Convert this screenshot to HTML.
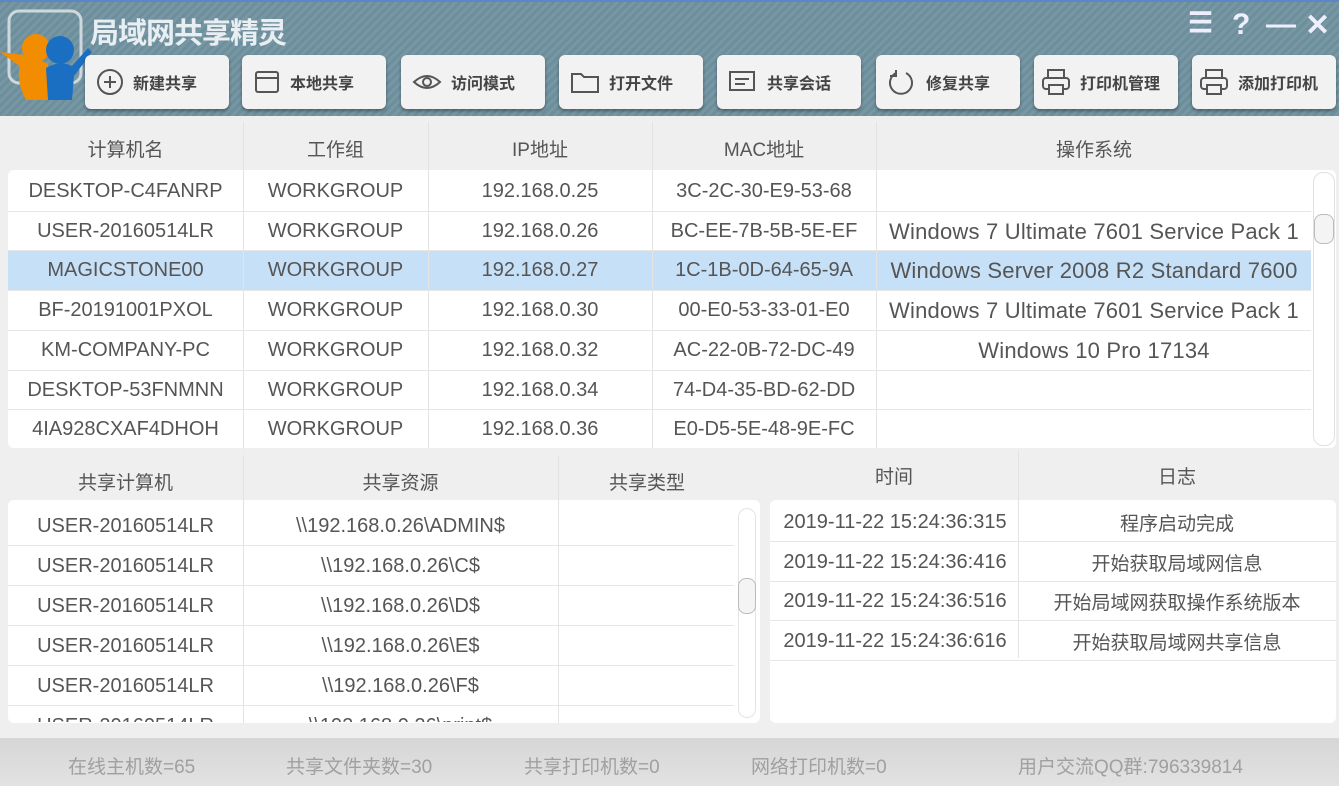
<!DOCTYPE html>
<html><head><meta charset="utf-8"><style>
*{margin:0;padding:0;box-sizing:border-box}
body{width:1339px;height:786px;overflow:hidden;background:#efefef;font-family:"Liberation Sans","Noto Sans CJK SC",sans-serif;color:#555;position:relative}
.hdr{position:absolute;left:0;top:0;width:1339px;height:116px;background:repeating-linear-gradient(135deg,#6d8e9b 0 3px,#7897a4 3px 6px);border-top:2px solid #5b86c8}
.title{position:absolute;left:90px;top:8px;font-size:29px;font-weight:bold;color:#e8eef2;letter-spacing:-1px}
.btn{position:absolute;top:53px;height:54px;width:144px;background:#f2f2f2;border-radius:6px;box-shadow:0 2px 3px rgba(0,0,0,.35);display:flex;align-items:center;font-size:16px;font-weight:bold;color:#444;padding-left:10px}
.btn svg{margin-right:8px;flex:none}
.ctl{position:absolute;top:6px;color:#eef;font-size:30px;font-weight:bold}
.cell{position:absolute;text-align:center;font-size:20px;white-space:nowrap;overflow:hidden}
.th{font-size:19px;color:#555}
.panel{position:absolute;background:#fff;border-radius:6px}
.hl{position:absolute;height:1px;background:#e6e6e6}
.vl{position:absolute;width:1px;background:#e3e3e3}
.sb{position:absolute;font-size:19px;color:#a0a0a0;top:752px}
</style></head><body>
<div class="hdr">
<svg style="position:absolute;left:0;top:6px" width="92" height="96" viewBox="0 0 92 96">
<rect x="9" y="3" width="72" height="72" rx="10" fill="none" stroke="#cfd8dc" stroke-width="3"/>
<path d="M0 44 L22 60 L40 60 L32 48 Z" fill="#f28c00"/>
<circle cx="36" cy="40" r="14" fill="#f28c00"/>
<path d="M20 57 Q36 48 48 56 L48 92 L26 92 Q16 74 20 57Z" fill="#f28c00"/>
<circle cx="60" cy="42" r="14" fill="#1b6fc2"/>
<path d="M46 60 Q60 52 72 58 L88 40 L92 44 L74 68 L72 92 L48 92Z" fill="#1b6fc2"/>
</svg>
<div class="title">局域网共享精灵</div>
<div class="ctl" style="left:1188px;top:4px;font-size:28px">☰</div>
<div class="ctl" style="left:1232px">?</div>
<div class="ctl" style="left:1266px">—</div>
<div class="ctl" style="left:1305px">✕</div>
<div class="btn" style="left:85px"><svg width="30" height="30"><circle cx="15" cy="15" r="12" fill="none" stroke="#555" stroke-width="2"/><path d="M15 9v12M9 15h12" stroke="#555" stroke-width="2"/></svg>新建共享</div>
<div class="btn" style="left:242px"><svg width="30" height="30"><rect x="4" y="5" width="22" height="20" rx="2" fill="none" stroke="#555" stroke-width="2"/><path d="M4 11h22" stroke="#555" stroke-width="2"/></svg>本地共享</div>
<div class="btn" style="left:401px"><svg width="32" height="30"><path d="M3 15Q16 3 29 15Q16 27 3 15Z" fill="none" stroke="#555" stroke-width="2"/><circle cx="16" cy="15" r="4" fill="none" stroke="#555" stroke-width="2"/></svg>访问模式</div>
<div class="btn" style="left:559px"><svg width="32" height="30"><path d="M3 7h9l3 3h14v15H3Z" fill="none" stroke="#555" stroke-width="2"/></svg>打开文件</div>
<div class="btn" style="left:717px"><svg width="32" height="30"><rect x="3" y="5" width="24" height="18" fill="none" stroke="#555" stroke-width="2"/><path d="M8 12h14M8 17h10" stroke="#555" stroke-width="2"/></svg>共享会话</div>
<div class="btn" style="left:876px"><svg width="32" height="30"><path d="M10 6A11 11 0 1 0 20 6" fill="none" stroke="#555" stroke-width="2"/><path d="M10 3v6H4" fill="none" stroke="#555" stroke-width="2"/></svg>修复共享</div>
<div class="btn" style="left:1034px;padding-left:6px"><svg width="32" height="30"><rect x="8" y="3" width="16" height="8" fill="none" stroke="#555" stroke-width="2"/><rect x="3" y="11" width="26" height="11" rx="3" fill="none" stroke="#555" stroke-width="2"/><rect x="9" y="18" width="14" height="9" fill="#f2f2f2" stroke="#555" stroke-width="2"/></svg>打印机管理</div>
<div class="btn" style="left:1192px;padding-left:6px"><svg width="32" height="30"><rect x="8" y="3" width="16" height="8" fill="none" stroke="#555" stroke-width="2"/><rect x="3" y="11" width="26" height="11" rx="3" fill="none" stroke="#555" stroke-width="2"/><rect x="9" y="18" width="14" height="9" fill="#f2f2f2" stroke="#555" stroke-width="2"/></svg>添加打印机</div>
</div>

<div class="cell th" style="left:8px;width:235px;top:135px">计算机名</div>
<div class="cell th" style="left:243px;width:185px;top:135px">工作组</div>
<div class="cell th" style="left:428px;width:224px;top:135px">IP地址</div>
<div class="cell th" style="left:652px;width:224px;top:135px">MAC地址</div>
<div class="cell th" style="left:876px;width:436px;top:135px">操作系统</div>
<div class="vl" style="left:243px;top:122px;height:326px"></div>
<div class="vl" style="left:428px;top:122px;height:326px"></div>
<div class="vl" style="left:652px;top:122px;height:326px"></div>
<div class="vl" style="left:876px;top:122px;height:326px"></div>
<div class="panel" style="left:8px;top:170px;width:1328px;height:278px;z-index:-1"></div>
<div style="position:absolute;left:8px;top:251px;width:1303px;height:39px;background:#c6e0f7;z-index:-1"></div>
<div class="panel" style="left:1313px;top:172px;width:22px;height:274px;border:1px solid #e0e0e0;border-radius:10px"></div>
<div style="position:absolute;left:1314px;top:214px;width:20px;height:30px;border:1px solid #bbb;border-radius:8px;background:#f4f4f4"></div>
<div id="rows"></div>

<div class="cell th" style="left:8px;width:235px;top:468px">共享计算机</div>
<div class="cell th" style="left:243px;width:315px;top:468px">共享资源</div>
<div class="cell th" style="left:558px;width:178px;top:468px">共享类型</div>
<div class="vl" style="left:243px;top:455px;height:268px"></div>
<div class="vl" style="left:558px;top:455px;height:268px"></div>
<div class="panel" style="left:8px;top:500px;width:752px;height:223px;z-index:-1"></div>
<div style="position:absolute;left:738px;top:508px;width:18px;height:210px;border:1px solid #e4e4e4;border-radius:9px"></div>
<div style="position:absolute;left:738px;top:578px;width:18px;height:36px;border:1px solid #bbb;border-radius:8px;background:#f4f4f4"></div>
<div id="rows2" style="position:absolute;left:0;top:0;width:1339px;height:722px;overflow:hidden"></div>

<div class="cell th" style="left:770px;width:248px;top:462px">时间</div>
<div class="cell th" style="left:1018px;width:318px;top:462px">日志</div>
<div class="vl" style="left:1018px;top:450px;height:208px"></div>
<div class="panel" style="left:770px;top:500px;width:566px;height:223px;z-index:-1"></div>
<div id="rows3"></div>

<div style="position:absolute;left:0;top:738px;width:1339px;height:48px;background:linear-gradient(#d6d6d6,#e2e2e2)"></div>
<div class="sb" style="left:68px">在线主机数=65</div>
<div class="sb" style="left:286px">共享文件夹数=30</div>
<div class="sb" style="left:524px">共享打印机数=0</div>
<div class="sb" style="left:751px">网络打印机数=0</div>
<div class="sb" style="left:1018px">用户交流QQ群:796339814</div>

<script>
var d=[["DESKTOP-C4FANRP","3C-2C-30-E9-53-68","","192.168.0.25"],["USER-20160514LR","BC-EE-7B-5B-5E-EF","Windows 7 Ultimate 7601 Service Pack 1","192.168.0.26"],["MAGICSTONE00","1C-1B-0D-64-65-9A","Windows Server 2008 R2 Standard 7600","192.168.0.27"],["BF-20191001PXOL","00-E0-53-33-01-E0","Windows 7 Ultimate 7601 Service Pack 1","192.168.0.30"],["KM-COMPANY-PC","AC-22-0B-72-DC-49","Windows 10 Pro 17134","192.168.0.32"],["DESKTOP-53FNMNN","74-D4-35-BD-62-DD","","192.168.0.34"],["4IA928CXAF4DHOH","E0-D5-5E-48-9E-FC","","192.168.0.36"]];
var h="";d.forEach(function(r,i){var y=171+i*39.7;
h+='<div class="cell" style="left:8px;width:235px;top:'+(y+9)+'px">'+r[0]+'</div><div class="cell" style="left:243px;width:185px;top:'+(y+9)+'px">WORKGROUP</div><div class="cell" style="left:428px;width:224px;top:'+(y+9)+'px">'+r[3]+'</div><div class="cell" style="left:652px;width:224px;top:'+(y+9)+'px">'+r[1]+'</div><div class="cell" style="left:876px;width:436px;top:'+(y+8)+'px;font-size:22px;letter-spacing:0.2px">'+r[2]+'</div>';
if(i)h+='<div class="hl" style="left:8px;width:1303px;top:'+y+'px"></div>';});
document.getElementById("rows").innerHTML=h;
var s=["ADMIN$","C$","D$","E$","F$","print$"];h="";
s.forEach(function(r,i){var y=505+i*40;
h+='<div class="cell" style="left:8px;width:235px;top:'+(y+10)+'px">USER-20160514LR</div><div class="cell" style="left:243px;width:315px;top:'+(y+10)+'px">\\\\192.168.0.26\\'+r+'</div>';
if(i)h+='<div class="hl" style="left:8px;width:726px;top:'+y+'px"></div>';});
document.getElementById("rows2").innerHTML=h;
var l=["程序启动完成","开始获取局域网信息","开始局域网获取操作系统版本","开始获取局域网共享信息"];h="";
l.forEach(function(r,i){var y=502+i*39.5;
h+='<div class="cell" style="left:772px;width:246px;top:'+(y+9)+'px">2019-11-22 15:24:36:'+(315+i*100+(i?1:0))+'</div><div class="cell" style="left:1018px;width:318px;top:'+(y+7)+'px;font-size:19px">'+r+'</div><div class="hl" style="left:770px;width:566px;top:'+(y+39)+'px"></div>';});
document.getElementById("rows3").innerHTML=h;
</script>
</body></html>
